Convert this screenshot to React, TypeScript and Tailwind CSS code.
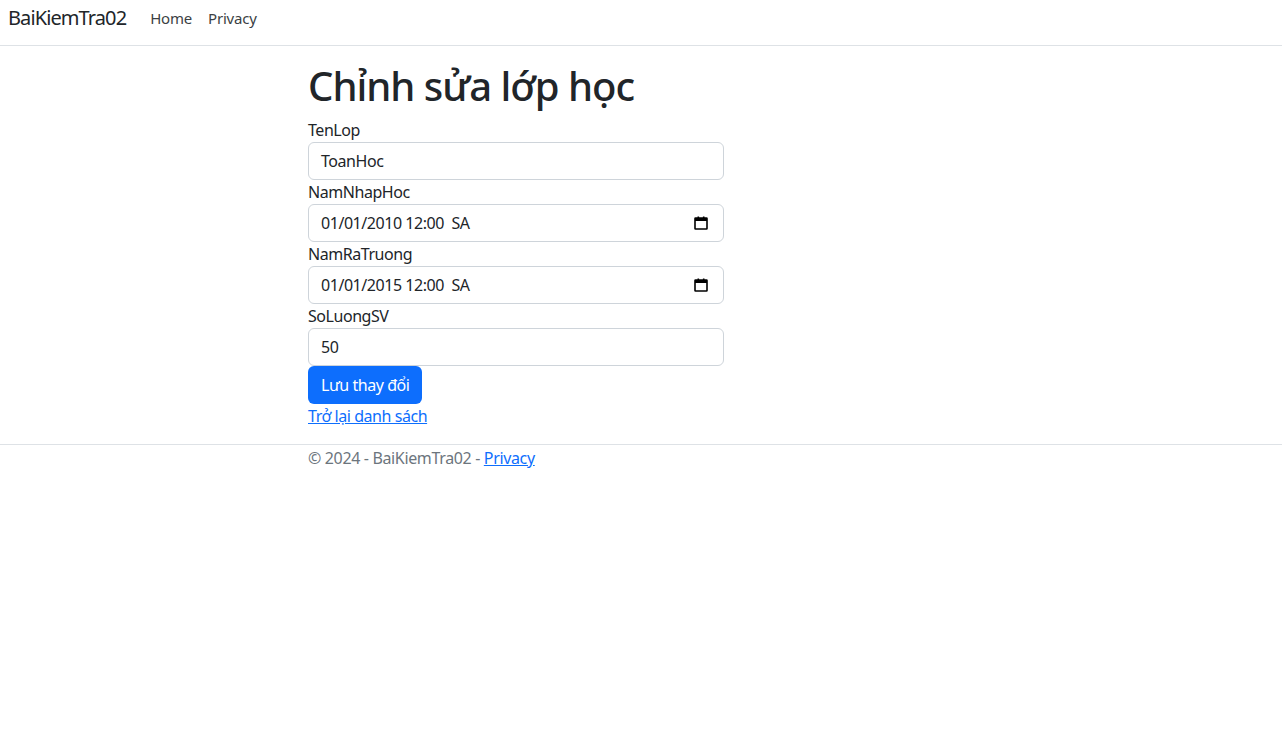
import React from "react";

function CalendarIcon() {
  return (
    <svg width="14" height="14" viewBox="0 0 14 14" className="shrink-0">
      <rect x="1" y="2" width="12" height="11" fill="none" stroke="#000" strokeWidth="1.6" rx="0.5" />
      <rect x="1" y="2" width="12" height="3" fill="#000" />
      <rect x="3.5" y="0.5" width="1.6" height="2.5" fill="#000" />
      <rect x="8.9" y="0.5" width="1.6" height="2.5" fill="#000" />
    </svg>
  );
}

function Field({ label, children }: { label: string; children: React.ReactNode }) {
  return (
    <div>
      <label className="block h-[24px] leading-[24px]">{label}</label>
      {children}
    </div>
  );
}

export default function App() {
  const font = { fontFamily: '"Noto Sans", "Open Sans", sans-serif' };
  return (
    <div className="min-h-[756px] bg-white text-[#212529] text-[16px] tracking-[-0.45px]" style={font}>
      <header className="h-[46px] border-b border-[#dee2e6] pl-[8px]">
        <div className="h-[36px] flex items-center">
          <span className="text-[20px] text-[#212529] mr-[24px] leading-none tracking-[-0.9px]">BaiKiemTra02</span>
          <nav className="flex gap-[16px] text-[15px] text-[#3b3f44] tracking-[-0.2px]">
            <span>Home</span>
            <span>Privacy</span>
          </nav>
        </div>
      </header>
      <main className="pl-[308px] pt-[15px]">
        <div className="w-[416px]">
          <h1 className="text-[40px] font-medium leading-[49px] mb-[8px] whitespace-nowrap tracking-[-1px]">Chỉnh sửa lớp học</h1>
          <Field label="TenLop">
            <div className="h-[38px] border border-[#ced4da] rounded-[6px] px-[12px] flex items-center">ToanHoc</div>
          </Field>
          <Field label="NamNhapHoc">
            <div className="h-[38px] border border-[#ced4da] rounded-[6px] pl-[12px] pr-[15px] flex items-center justify-between">
              <span>01/01/2010 12:00&nbsp; SA</span>
              <CalendarIcon />
            </div>
          </Field>
          <Field label="NamRaTruong">
            <div className="h-[38px] border border-[#ced4da] rounded-[6px] pl-[12px] pr-[15px] flex items-center justify-between">
              <span>01/01/2015 12:00&nbsp; SA</span>
              <CalendarIcon />
            </div>
          </Field>
          <Field label="SoLuongSV">
            <div className="h-[38px] border border-[#ced4da] rounded-[6px] px-[12px] flex items-center">50</div>
          </Field>
          <button className="h-[38px] px-[13px] bg-[#0d6efd] text-white rounded-[6px]">Lưu thay đổi</button>
          <div className="h-[24px] leading-[24px]">
            <a className="text-[#0d6efd] underline">Trở lại danh sách</a>
          </div>
        </div>
      </main>
      <footer className="mt-[16px] border-t border-[#dee2e6] pl-[308px] h-[26px] leading-[26px] text-[#6c757d] tracking-[-0.35px]">
        © 2024 - BaiKiemTra02 - <a className="text-[#0d6efd] underline">Privacy</a>
      </footer>
    </div>
  );
}
